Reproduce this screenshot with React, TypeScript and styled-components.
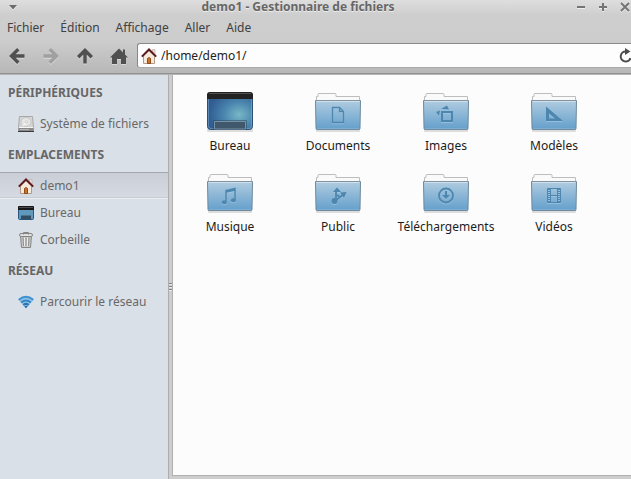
import React from 'react';
import styled, { createGlobalStyle, css } from 'styled-components';

const GlobalStyle = createGlobalStyle`
  *, *::before, *::after { box-sizing: border-box; }
  html, body { margin: 0; height: 100%; }
  body {
    overflow: hidden;
    background: #cdcdcd;
    color: #2c2c2c;
    font: 12px/18px "Noto Sans", "Open Sans", sans-serif;
  }
  button, input { font: inherit; color: inherit; }
  svg { display: block; flex: none; }
`;

const Window = styled.div`
  display: flex;
  flex-direction: column;
  height: 100vh;
  overflow: hidden;
`;

const Chrome = styled.header`
  flex: none;
  background: linear-gradient(#dedede, #cecece 15px, #cdcdcd 40px, #b8b8b8 72px);
  border-bottom: 1px solid #929292;
  box-shadow: 0 1px 0 #b4b4b4;
  margin-bottom: 1px;
`;

const TitleBar = styled.div`
  display: flex;
  align-items: center;
  height: 13px;
  color: #666;
`;

const Title = styled.h1`
  flex: 1;
  margin: 0;
  text-align: center;
  font-size: 12px;
  line-height: 13px;
  font-weight: 700;
  text-shadow: 0 1px 0 #ececec;
  white-space: nowrap;
`;

const PlainButton = styled.button`
  display: flex;
  align-items: center;
  justify-content: center;
  flex: none;
  padding: 0;
  border: 0;
  background: none;
`;

const WindowButton = styled(PlainButton)<{ $wide?: boolean }>`
  width: ${(p) => (p.$wide ? 26 : 22)}px;
  height: 12px;
  svg { filter: drop-shadow(0 1px 0 #eee); }
`;

const WindowButtons = styled.div`
  display: flex;
  margin-right: -5px;
`;

const MenuBar = styled.nav`
  display: flex;
  gap: 16px;
  padding: 6px 7px;
  height: 30px;
`;

const MenuButton = styled(PlainButton)`
  height: 18px;
  color: #404040;
`;

const ToolBar = styled.div`
  display: flex;
  align-items: center;
  height: 30px;
  padding-bottom: 5px;
`;

const ToolButton = styled(PlainButton)<{ $dim?: boolean }>`
  width: 34px;
  height: 25px;
  color: ${(p) => (p.$dim ? '#a0a0a0' : '#505050')};
  svg { filter: drop-shadow(0 1px 0 #d8d8d8); }
`;

const PathField = styled.label`
  display: flex;
  flex: 1;
  align-items: center;
  height: 25px;
  margin-left: 1px;
  padding-left: 3px;
  gap: 4px;
  background: #fdfdfd;
  border: 1px solid #888;
  border-bottom-color: #aaa;
  border-right: 0;
  border-radius: 3px 0 0 3px;
`;

const PathInput = styled.input`
  flex: 1;
  min-width: 0;
  padding: 0;
  border: 0;
  outline: 0;
  background: none;
  color: #222;
`;

const ReloadButton = styled(PlainButton)`
  width: 13px;
  color: #4c4c4c;
`;

const Body = styled.div`
  display: flex;
  flex: 1;
  min-height: 0;
`;

const Sidebar = styled.aside`
  flex: none;
  width: 168px;
  background: #dae0e7;
`;

const SectionTitle = styled.h2`
  margin: 0;
  padding-left: 8px;
  font-size: 12px;
  line-height: 35px;
  font-weight: 700;
  color: #666;
`;

const Places = styled.ul`
  list-style: none;
  margin: 0;
  padding: 0;
`;

const Place = styled(PlainButton)<{ $selected?: boolean }>`
  width: 100%;
  height: 27px;
  justify-content: flex-start;
  gap: 6px;
  padding-left: 18px;
  color: #686868;
  white-space: nowrap;
  ${(p) => p.$selected && css`
    background: linear-gradient(#c9ced6, #d7dce4);
    box-shadow: inset 0 1px 0 #a3a7ad, inset 0 -1px 0 #e9edf2, inset 0 -2px 0 #c8cdd4;
  `}
`;

const Splitter = styled.div`
  display: flex;
  flex: none;
  flex-direction: column;
  align-items: center;
  justify-content: center;
  gap: 2px;
  width: 4px;
  padding-top: 18px;
  background: #cdcdcd;
  border-left: 1px solid #adadad;
`;

const Grip = styled.span`
  width: 3px;
  height: 1px;
  background: #858585;
  box-shadow: 0 1px 0 #e8e8e8;
`;

const Files = styled.main`
  flex: 1;
  min-width: 0;
  margin-bottom: 3px;
  padding: 12px 3px;
  background: #fcfcfc;
  border-left: 1px solid #b0b0b0;
  border-bottom: 1px solid #b0b0b0;
`;

const FileGrid = styled.div`
  display: grid;
  grid-template-columns: repeat(auto-fill, 108px);
  row-gap: 13px;
`;

const File = styled(PlainButton)`
  flex-direction: column;
  gap: 2px;
  color: #1c1c1c;
`;

const HouseIcon = () => (
  <svg width="16" height="16" viewBox="0 0 16 16" aria-hidden="true">
    <path d="M11.500 1.500h2.500v5h-2.500z" fill="#efe2d5" stroke="#b8a698" strokeWidth=".6" />
    <path d="M2.500 8 8 2.500 13.500 8v7.500h-11z" fill="#f5e9dc" stroke="#b59a86" />
    <path d="M6.500 10.500q1.500-2 3 0v5h-3z" fill="#c7752f" stroke="#8d4a1a" />
    <path d="M.8 8.600 8 1.500l7.200 7.100" fill="none" stroke="#5d1a1e" strokeWidth="2" />
  </svg>
);

const DiskIcon = () => (
  <svg width="16" height="16" viewBox="0 0 16 16" aria-hidden="true">
    <path d="M1.500.5h13l1 11v3.500H.5v-3.500z" fill="#d6d6d6" stroke="#a8a8a8" />
    <ellipse cx="8" cy="6" rx="5" ry="4.500" fill="#e6e6e6" stroke="#c6c6c6" />
    <path d="M8.500 6.500 5 9.500" stroke="#f8f8f8" strokeWidth="1.200" />
    <circle cx="8.500" cy="6" r="1.300" fill="#f2f2f2" stroke="#b4b4b4" strokeWidth=".5" />
    <path d="M1 11.500h14" stroke="#f5f5f5" />
    <path d="M.5 12h15v3.500H.5z" fill="#8a8a8a" />
    <path d="M2 13.500h9" stroke="#b5b5b5" />
    <path d="M0 15.500h16" stroke="#3b3b3b" />
  </svg>
);

const TrashIcon = () => (
  <svg width="16" height="16" viewBox="0 0 16 16" aria-hidden="true">
    <path d="m2.500 4 1 11.500h9l1-11.500z" fill="#c9c9c9" stroke="#858585" />
    <path d="M5 5.500 5.500 14M8 5.500V14M11 5.500 10.500 14" stroke="#8f8f8f" fill="none" />
    <path d="M6.500 5.500V14M9.500 5.500V14" stroke="#ececec" />
    <rect x="1.500" y="1.500" width="13" height="3" rx="1.500" fill="#e2e2e2" stroke="#858585" />
    <path d="M5.500 2.500v-2h5v2" fill="none" stroke="#858585" />
  </svg>
);

const WifiIcon = () => (
  <svg width="16" height="16" viewBox="0 0 16 16" aria-hidden="true">
    <path d="M0 5.500Q8-1.500 16 5.500L8 14.500z" fill="#8fc4e6" />
    <g fill="none" strokeWidth="2">
      <path d="M.8 5.800q7.200-6.200 14.400 0" stroke="#3f92d0" />
      <path d="M3.200 8.500q4.800-4 9.600 0" stroke="#3585c5" />
      <path d="M5.300 11q2.700-2.200 5.400 0" stroke="#2a75b4" />
    </g>
    <path d="m6.300 12.300 1.700 2 1.700-2q-1.700-1.300-3.400 0z" fill="#2469a8" />
  </svg>
);

const DesktopIcon = () => (
  <svg width="48" height="48" viewBox="0 0 48 48" aria-hidden="true">
    <defs>
      <radialGradient id="screen" cx=".7" cy=".6" r=".68">
        <stop offset="0" stopColor="#78b8c6" />
        <stop offset=".5" stopColor="#4a85ae" />
        <stop offset="1" stopColor="#305c92" />
      </radialGradient>
    </defs>
    <rect x="1" y="42" width="46" height="3" rx="1" fill="#000" opacity=".12" />
    <rect x="1.500" y="5.500" width="45" height="37" rx="3" fill="url(#screen)" stroke="#2b4f75" />
    <path d="M1 12V8q0-3 3-3h40q3 0 3 3v4z" fill="#222" />
    <path d="M3 6.500h42" stroke="#505050" />
    <path d="M2.500 12v27q0 2.500 2.500 2.500h38q2.500 0 2.500-2.500V12" fill="none" stroke="#8fb8d4" strokeOpacity=".45" />
    <path d="M8.500 42v-7.500h31V42z" fill="#40586b" stroke="#7890a2" />
    <path d="M7.500 42v-8.500h33V42" fill="none" stroke="#27455f" strokeOpacity=".5" />
  </svg>
);

const SmallDesktopIcon = () => (
  <svg width="16" height="16" viewBox="0 0 16 16" aria-hidden="true">
    <rect x=".5" y="1.500" width="15" height="13" rx="1" fill="#6199bd" stroke="#285681" />
    <path d="M0 1.500q0-.5 1-.5h14q1 0 1 .5V5H0z" fill="#171717" />
    <path d="M1 2.500h14" stroke="#4b4b4b" />
    <path d="M3 10.500h10V14H3z" fill="#334e62" />
  </svg>
);

const emblems: Record<string, React.ReactNode> = {
  Documents: <path d="M18.500 20.500h7l4 4v11h-11zM25.500 20.500v4h4" fill="none" stroke="currentColor" strokeWidth="1.300" />,
  Images: (
    <>
      <path d="m19 22 6-3.500 2 4zM18 23.500l-4 1.500 3 4z" fill="currentColor" />
      <rect x="20" y="25" width="10" height="9" fill="none" stroke="currentColor" strokeWidth="2" />
    </>
  ),
  'Modèles': <path fillRule="evenodd" d="M16 19.500v14.500h17zM19 26.500v5h6z" fill="currentColor" />,
  Musique: (
    <>
      <path d="M20 34V22.500l9-2V32M20 24l9-2" fill="none" stroke="currentColor" strokeWidth="1.500" />
      <ellipse cx="18.300" cy="34.200" rx="2.500" ry="2" fill="currentColor" />
      <ellipse cx="27.300" cy="32.200" rx="2.500" ry="2" fill="currentColor" />
    </>
  ),
  Public: (
    <>
      <circle cx="20.500" cy="33" r="3" fill="currentColor" />
      <path d="M22 31V23M21 33l9-7M23 27l3 2" fill="none" stroke="currentColor" strokeWidth="1.800" />
      <path d="m19 24 4-4.500 4 4.500zM26 24.500l6.500-.5-2.500 6z" fill="currentColor" />
    </>
  ),
  'Téléchargements': (
    <>
      <circle cx="24" cy="27.500" r="7" fill="none" stroke="currentColor" strokeWidth="1.800" />
      <path d="M23 23h2v4h3l-4 4-4-4h3z" fill="currentColor" />
    </>
  ),
  'Vidéos': (
    <>
      <path d="M17.500 20.500h13v14h-13zM20.500 20.500v14M27.500 20.500v14M20.500 27.500h7" fill="none" stroke="currentColor" />
      <path d="M19 21v13M29 21v13" fill="none" stroke="currentColor" strokeWidth="2" strokeDasharray="1 1" />
    </>
  ),
};

const FolderIcon = ({ name }: { name: string }) => (
  <svg width="48" height="48" viewBox="0 0 48 48" aria-hidden="true">
    <defs>
      <linearGradient id={`folder-${name}`} x1="0" y1="0" x2="0" y2="1">
        <stop offset="0" stopColor="#b0cce0" />
        <stop offset="1" stopColor="#649fcb" />
      </linearGradient>
    </defs>
    <rect x="2" y="42" width="44" height="3" rx="1" fill="#000" opacity=".12" />
    <path d="M2.500 16V9.500h1.500V7.500q0-1 1-1h16q1 0 1 1v2h23.500V16z" fill="#fafafa" stroke="#bdbdbd" />
    <path d="M1.500 13.500h45L46 41.500q0 1-1 1H3q-1 0-1-1z" fill={`url(#folder-${name})`} stroke="#6f8a9c" />
    <path d="M2 13.500h44" stroke="#82929e" />
    <path d="M2.500 14.500h43" stroke="#cfe0ee" />
    <g transform="translate(0 1)" color="#a5cbe5" opacity=".6">{emblems[name]}</g>
    <g color="#4d86ae">{emblems[name]}</g>
    <path d="M3 41.500h42" stroke="#8bb8da" strokeOpacity=".6" />
  </svg>
);

const Arrow = ({ turn = 0 }: { turn?: number }) => (
  <svg width="18" height="18" viewBox="0 0 18 18" aria-hidden="true">
    <path transform={`rotate(${turn} 9 9)`} d="M16.500 9H5M10.300 2.200 3.500 9l6.800 6.800" fill="none" stroke="currentColor" strokeWidth="3.400" />
  </svg>
);

const HomeGlyph = () => (
  <svg width="18" height="18" viewBox="0 0 18 18" aria-hidden="true">
    <path d="M9 1.500 0 10.500h2V17h5v-5h4v5h5v-6.500h2L15 7.500V2.500h-2V5.500z" fill="currentColor" />
  </svg>
);

const ReloadGlyph = () => (
  <svg width="14" height="16" viewBox="0 0 14 16" aria-hidden="true">
    <path d="M8 3.500A5 5 0 1 0 12.500 10" fill="none" stroke="currentColor" strokeWidth="2" />
    <path d="M7 0v7l5.500-3.500z" fill="currentColor" />
  </svg>
);

const WindowGlyph = ({ d, solid }: { d: string; solid?: boolean }) => (
  <svg width="10" height="10" viewBox="0 0 10 10" aria-hidden="true">
    <path d={d} fill={solid ? '#6b6b6b' : 'none'} stroke={solid ? 'none' : '#747474'} strokeWidth="2" />
  </svg>
);

const sections: { title: string; places: { name: string; icon: React.ReactNode; selected?: boolean }[] }[] = [
  { title: 'PÉRIPHÉRIQUES', places: [{ name: 'Système de fichiers', icon: <DiskIcon /> }] },
  {
    title: 'EMPLACEMENTS',
    places: [
      { name: 'demo1', icon: <HouseIcon />, selected: true },
      { name: 'Bureau', icon: <SmallDesktopIcon /> },
      { name: 'Corbeille', icon: <TrashIcon /> },
    ],
  },
  { title: 'RÉSEAU', places: [{ name: 'Parcourir le réseau', icon: <WifiIcon /> }] },
];

const files = ['Bureau', 'Documents', 'Images', 'Modèles', 'Musique', 'Public', 'Téléchargements', 'Vidéos'];

export default function App() {
  return (
    <>
      <GlobalStyle />
      <Window>
        <Chrome>
          <TitleBar>
            <WindowButton $wide aria-label="Menu de la fenêtre"><WindowGlyph solid d="M1 3h8L5 7.500z" /></WindowButton>
            <Title>demo1 - Gestionnaire de fichiers</Title>
            <WindowButtons>
              <WindowButton aria-label="Réduire"><WindowGlyph d="M1 5h8" /></WindowButton>
              <WindowButton aria-label="Agrandir"><WindowGlyph d="M1 5h8M5 1v8" /></WindowButton>
              <WindowButton aria-label="Fermer"><WindowGlyph d="m1 1 8 8M9 1 1 9" /></WindowButton>
            </WindowButtons>
          </TitleBar>
          <MenuBar>
            {['Fichier', 'Édition', 'Affichage', 'Aller', 'Aide'].map((m) => <MenuButton key={m}>{m}</MenuButton>)}
          </MenuBar>
          <ToolBar>
            <ToolButton aria-label="Précédent"><Arrow /></ToolButton>
            <ToolButton aria-label="Suivant" $dim disabled><Arrow turn={180} /></ToolButton>
            <ToolButton aria-label="Dossier parent"><Arrow turn={90} /></ToolButton>
            <ToolButton aria-label="Dossier personnel"><HomeGlyph /></ToolButton>
            <PathField>
              <HouseIcon />
              <PathInput aria-label="Emplacement" defaultValue="/home/demo1/" />
              <ReloadButton aria-label="Recharger"><ReloadGlyph /></ReloadButton>
            </PathField>
          </ToolBar>
        </Chrome>
        <Body>
          <Sidebar>
            {sections.map((s) => (
              <section key={s.title}>
                <SectionTitle>{s.title}</SectionTitle>
                <Places>
                  {s.places.map((p) => (
                    <li key={p.name}><Place $selected={p.selected}>{p.icon}{p.name}</Place></li>
                  ))}
                </Places>
              </section>
            ))}
          </Sidebar>
          <Splitter><Grip /><Grip /><Grip /></Splitter>
          <Files>
            <FileGrid>
              {files.map((f) => (
                <File key={f}>{f === 'Bureau' ? <DesktopIcon /> : <FolderIcon name={f} />}{f}</File>
              ))}
            </FileGrid>
          </Files>
        </Body>
      </Window>
    </>
  );
}
